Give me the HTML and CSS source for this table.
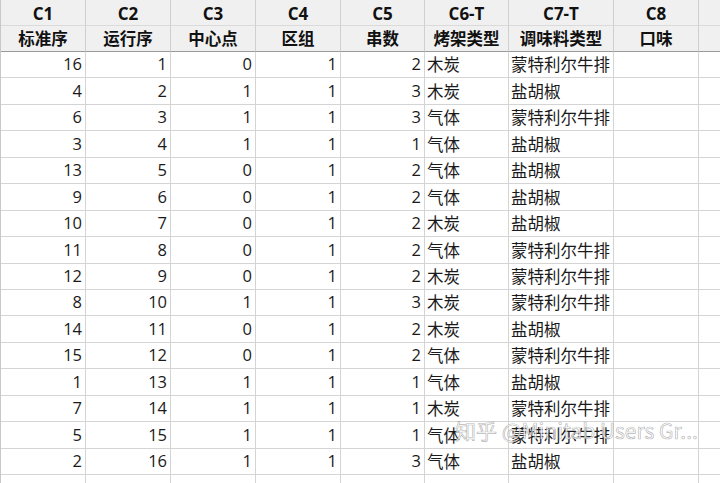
FILE: index.html
```html
<!DOCTYPE html>
<html lang="zh">
<head>
<meta charset="utf-8">
<link rel="stylesheet" href="styles.css">
</head>
<body>
<div class="sheet">
  <div class="grid">
    <div class="h1">C1</div><div class="h1">C2</div><div class="h1">C3</div><div class="h1">C4</div><div class="h1">C5</div><div class="h1">C6-T</div><div class="h1">C7-T</div><div class="h1">C8</div><div class="h1"></div>
    <div class="h2">标准序</div><div class="h2">运行序</div><div class="h2">中心点</div><div class="h2">区组</div><div class="h2">串数</div><div class="h2">烤架类型</div><div class="h2">调味料类型</div><div class="h2">口味</div><div class="h2"></div>

    <div class="n">16</div><div class="n">1</div><div class="n">0</div><div class="n">1</div><div class="n">2</div><div class="t">木炭</div><div class="t">蒙特利尔牛排</div><div class="e"></div><div class="e"></div>
    <div class="n">4</div><div class="n">2</div><div class="n">1</div><div class="n">1</div><div class="n">3</div><div class="t">木炭</div><div class="t">盐胡椒</div><div class="e"></div><div class="e"></div>
    <div class="n">6</div><div class="n">3</div><div class="n">1</div><div class="n">1</div><div class="n">3</div><div class="t">气体</div><div class="t">蒙特利尔牛排</div><div class="e"></div><div class="e"></div>
    <div class="n">3</div><div class="n">4</div><div class="n">1</div><div class="n">1</div><div class="n">1</div><div class="t">气体</div><div class="t">盐胡椒</div><div class="e"></div><div class="e"></div>
    <div class="n">13</div><div class="n">5</div><div class="n">0</div><div class="n">1</div><div class="n">2</div><div class="t">气体</div><div class="t">盐胡椒</div><div class="e"></div><div class="e"></div>
    <div class="n">9</div><div class="n">6</div><div class="n">0</div><div class="n">1</div><div class="n">2</div><div class="t">气体</div><div class="t">盐胡椒</div><div class="e"></div><div class="e"></div>
    <div class="n">10</div><div class="n">7</div><div class="n">0</div><div class="n">1</div><div class="n">2</div><div class="t">木炭</div><div class="t">盐胡椒</div><div class="e"></div><div class="e"></div>
    <div class="n">11</div><div class="n">8</div><div class="n">0</div><div class="n">1</div><div class="n">2</div><div class="t">气体</div><div class="t">蒙特利尔牛排</div><div class="e"></div><div class="e"></div>
    <div class="n">12</div><div class="n">9</div><div class="n">0</div><div class="n">1</div><div class="n">2</div><div class="t">木炭</div><div class="t">蒙特利尔牛排</div><div class="e"></div><div class="e"></div>
    <div class="n">8</div><div class="n">10</div><div class="n">1</div><div class="n">1</div><div class="n">3</div><div class="t">木炭</div><div class="t">蒙特利尔牛排</div><div class="e"></div><div class="e"></div>
    <div class="n">14</div><div class="n">11</div><div class="n">0</div><div class="n">1</div><div class="n">2</div><div class="t">木炭</div><div class="t">盐胡椒</div><div class="e"></div><div class="e"></div>
    <div class="n">15</div><div class="n">12</div><div class="n">0</div><div class="n">1</div><div class="n">2</div><div class="t">气体</div><div class="t">蒙特利尔牛排</div><div class="e"></div><div class="e"></div>
    <div class="n">1</div><div class="n">13</div><div class="n">1</div><div class="n">1</div><div class="n">1</div><div class="t">气体</div><div class="t">盐胡椒</div><div class="e"></div><div class="e"></div>
    <div class="n">7</div><div class="n">14</div><div class="n">1</div><div class="n">1</div><div class="n">1</div><div class="t">木炭</div><div class="t">蒙特利尔牛排</div><div class="e"></div><div class="e"></div>
    <div class="n">5</div><div class="n">15</div><div class="n">1</div><div class="n">1</div><div class="n">1</div><div class="t">气体</div><div class="t">蒙特利尔牛排</div><div class="e"></div><div class="e"></div>
    <div class="n">2</div><div class="n">16</div><div class="n">1</div><div class="n">1</div><div class="n">3</div><div class="t">气体</div><div class="t">盐胡椒</div><div class="e"></div><div class="e"></div>
    <div class="e"></div><div class="e"></div><div class="e"></div><div class="e"></div><div class="e"></div><div class="e"></div><div class="e"></div><div class="e"></div><div class="e"></div>
  </div>
  <div class="watermark">知乎 @Minitab Users Gr...</div>
</div>
</body>
</html>
```

FILE: styles.css
```css
html, body {
  margin: 0;
  padding: 0;
  background: #ffffff;
}
body {
  width: 720px;
  height: 483px;
  overflow: hidden;
  font-family: "Open Sans", "Noto Sans CJK SC", sans-serif;
  color: #1a1a1a;
}
.sheet {
  position: relative;
  width: 720px;
  height: 483px;
  overflow: hidden;
}
.grid {
  display: grid;
  grid-template-columns: 85px 85px 85px 85px 84px 84px 105px 85px 60px;
  grid-template-rows: 26px 26px repeat(17, 26.45px);
  border-left: 1px solid #c8c8c8;
}
.grid > div {
  box-sizing: border-box;
  border-right: 1px solid #d4d4d4;
  border-bottom: 1px solid #d4d4d4;
  font-size: 16px;
  line-height: 1;
  display: flex;
  align-items: center;
  white-space: nowrap;
  overflow: hidden;
}
.grid > .h1, .grid > .h2 {
  background: #f0f0f0;
  font-weight: bold;
  justify-content: center;
  color: #111;
  border-right-color: #cfcfcf;
  border-bottom-color: #dadada;
}
.grid > .h1 {
  font-family: "Open Sans", sans-serif;
  font-size: 17px;
  padding-top: 1px;
}
.grid > .h2 {
  font-family: "Noto Sans CJK SC", sans-serif;
  font-size: 16.5px;
  border-bottom: 1px solid #9a9a9a;
}
.grid > .n {
  justify-content: flex-end;
  padding-right: 3px;
  font-family: "Open Sans", "Noto Sans", sans-serif;
  font-size: 16.5px;
}
.grid > .t {
  justify-content: flex-start;
  padding-left: 2px;
  font-family: "Noto Sans CJK SC", sans-serif;
  font-size: 16.5px;
}
.watermark {
  position: absolute;
  left: 455px;
  top: 420px;
  font-family: "Noto Sans CJK SC", "Open Sans", sans-serif;
  font-size: 21px;
  line-height: 1;
  color: rgba(255, 255, 255, 0.75);
  -webkit-text-stroke: 0.7px rgba(90, 90, 90, 0.45);
  white-space: nowrap;
}
```
